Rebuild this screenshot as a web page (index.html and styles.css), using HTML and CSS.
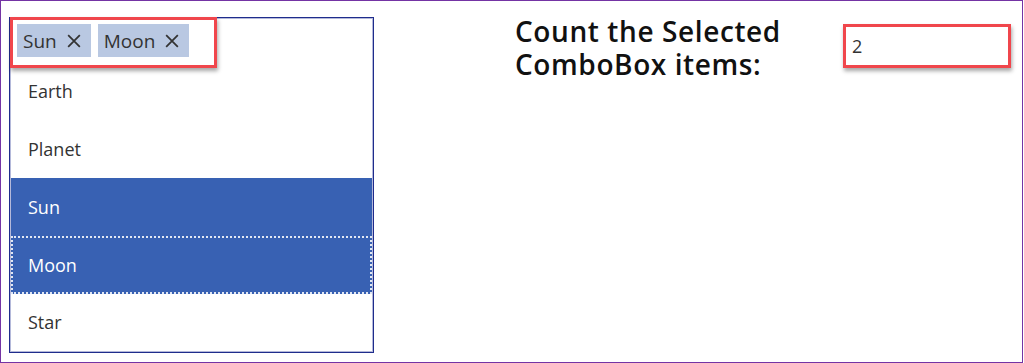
FILE: index.html
```html
<!DOCTYPE html>
<html>
<head>
<meta charset="utf-8">
<link rel="stylesheet" href="styles.css">
</head>
<body>
<div class="frame">
  <div class="combo">
    <div class="combo-head">
      <span class="tag">Sun <svg class="x" viewBox="0 0 12 12"><path d="M1 1L11 11M11 1L1 11"/></svg></span>
      <span class="tag">Moon <svg class="x" viewBox="0 0 12 12"><path d="M1 1L11 11M11 1L1 11"/></svg></span>
      <div class="mark mark-tags"></div>
    </div>
    <div class="item">Earth</div>
    <div class="item">Planet</div>
    <div class="item sel">Sun</div>
    <div class="item sel focus">Moon</div>
    <div class="item">Star</div>
  </div>
  <div class="side">
    <div class="title">
      <div class="title-line">Count the Selected</div>
      <div class="title-line">ComboBox items:</div>
    </div>
    <div class="count">2</div>
  </div>
</div>
</body>
</html>
```
FILE: styles.css
```css
html, body {
  margin: 0;
  padding: 0;
  background: #fff;
}
body {
  font-family: "Open Sans", "Noto Sans", sans-serif;
  color: #333;
}
.frame {
  box-sizing: border-box;
  width: 1023px;
  height: 363px;
  border: 1px solid #7434a4;
  display: flex;
  align-items: flex-start;
  padding: 16px 0 0 8px;
}
.combo {
  box-sizing: border-box;
  width: 365px;
  height: 336px;
  border: 1px solid #1f2c8c;
  box-shadow: inset 0 0 0 1px rgba(40, 55, 150, 0.35);
  display: flex;
  flex-direction: column;
}
.combo-head {
  position: relative;
  height: 44px;
  flex: none;
  display: flex;
  align-items: flex-start;
  gap: 7px;
  padding: 6px 0 0 7px;
  box-sizing: border-box;
}
.tag {
  display: flex;
  align-items: center;
  height: 33px;
  background: #b9c8e2;
  padding: 0 10px 0 6px;
  font-size: 19px;
  color: #333;
  gap: 10px;
}
.x {
  width: 14px;
  height: 14px;
  stroke: #333;
  stroke-width: 1.5;
  fill: none;
}
.mark {
  position: absolute;
  border: 3px solid #f0464c;
  box-shadow: 1px 3px 4px rgba(0, 0, 0, 0.35);
  box-sizing: border-box;
}
.mark-tags {
  left: 0;
  top: -1px;
  width: 207px;
  height: 51px;
}
.item {
  height: 58px;
  flex: none;
  display: flex;
  align-items: center;
  padding-left: 18px;
  font-size: 18px;
  color: #333;
}
.item:last-child {
  height: 56px;
}
.item.sel {
  background: #3861b3;
  color: #fff;
  margin-right: 1px;
  margin-left: 1px;
  padding-left: 17px;
}
.item.focus {
  outline: 2px dotted rgba(255, 255, 255, 0.85);
  outline-offset: -2px;
}
.side {
  display: flex;
  align-items: flex-start;
  margin-left: 141px;
}
.title {
  font-size: 28px;
  font-weight: 600;
  letter-spacing: 0.6px;
  color: #111;
  width: 328px;
  margin-top: -3px;
}
.title-line {
  line-height: 34px;
  height: 33px;
}
.count {
  box-sizing: border-box;
  width: 168px;
  height: 44px;
  margin-top: 7px;
  border: 3px solid #f0464c;
  box-shadow: 1px 3px 4px rgba(0, 0, 0, 0.35);
  font-size: 18px;
  color: #333;
  padding: 7px 0 0 6px;
}
```
